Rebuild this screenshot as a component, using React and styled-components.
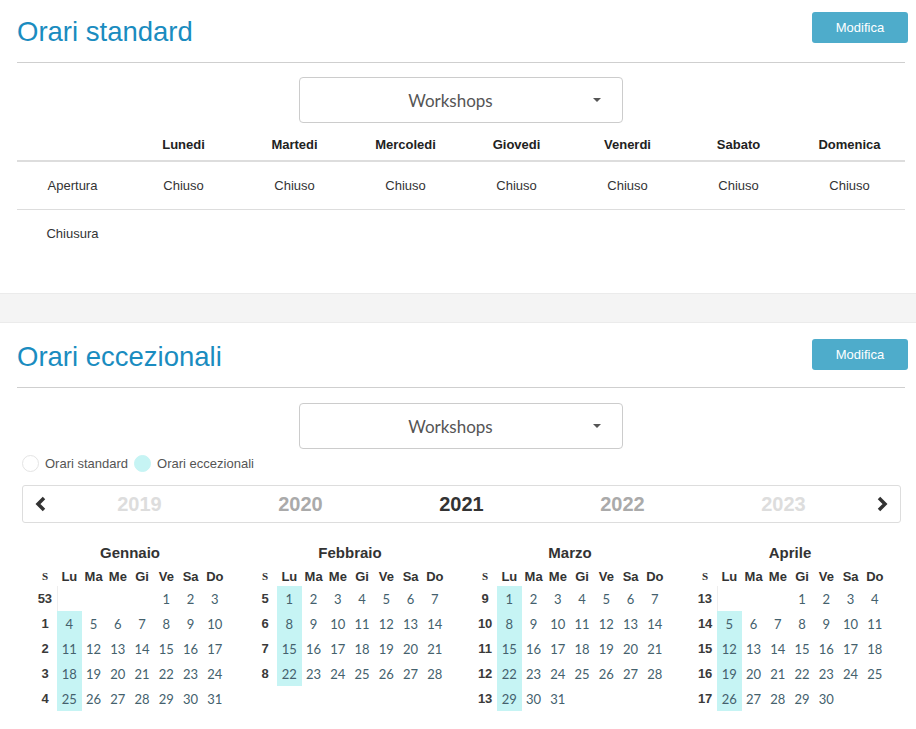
import React from 'react';
import styled, { createGlobalStyle } from 'styled-components';

const GlobalStyle = createGlobalStyle`
  body {
    margin: 0;
    background: #fff;
    font-family: 'Liberation Sans', Arial, sans-serif;
    color: #333;
  }
`;

const DAYS = ['Lunedi', 'Martedi', 'Mercoledi', 'Giovedi', 'Venerdi', 'Sabato', 'Domenica'];
const SHORT_DAYS = ['Lu', 'Ma', 'Me', 'Gi', 'Ve', 'Sa', 'Do'];
const MONTHS = ['Gennaio', 'Febbraio', 'Marzo', 'Aprile'];
const YEARS = [
  { label: '2019', tone: 'far' },
  { label: '2020', tone: 'near' },
  { label: '2021', tone: 'current' },
  { label: '2022', tone: 'near' },
  { label: '2023', tone: 'far' },
];

const isoWeek = (date) => {
  const d = new Date(Date.UTC(date.getFullYear(), date.getMonth(), date.getDate()));
  const day = d.getUTCDay() || 7;
  d.setUTCDate(d.getUTCDate() + 4 - day);
  const yearStart = new Date(Date.UTC(d.getUTCFullYear(), 0, 1));
  return Math.ceil(((d - yearStart) / 86400000 + 1) / 7);
};

const buildMonth = (year, month) => {
  const first = new Date(year, month, 1);
  const total = new Date(year, month + 1, 0).getDate();
  const offset = (first.getDay() + 6) % 7;
  const rows = [];
  let day = 1 - offset;
  while (day <= total) {
    const cells = [];
    let weekDate = null;
    for (let i = 0; i < 7; i++) {
      if (day >= 1 && day <= total) {
        cells.push(day);
        if (!weekDate) weekDate = new Date(year, month, day);
      } else {
        cells.push(null);
      }
      day++;
    }
    rows.push({ week: isoWeek(weekDate), cells });
  }
  return rows;
};

const Section = styled.section`
  padding: ${(p) => p.$top}px 11px ${(p) => p.$bottom}px 17px;
`;

const Header = styled.div`
  display: flex;
  justify-content: space-between;
  align-items: flex-start;
`;

const Title = styled.h2`
  margin: 0;
  font-size: 27.5px;
  line-height: 40px;
  font-weight: 400;
  color: #1a8cc0;
`;

const EditButton = styled.button`
  margin: ${(p) => p.$offset || 0}px -3px 0 0;
  width: 96px;
  height: 31px;
  border: none;
  border-radius: 3px;
  background: #4eaccb;
  color: #fff;
  font-family: 'Liberation Sans', Arial, sans-serif;
  font-size: 13px;
`;

const Divider = styled.hr`
  margin: 10px 0 0 0;
  border: none;
  border-top: 1px solid #cfcfcf;
`;

const Select = styled.div`
  width: 324px;
  height: 46px;
  margin: ${(p) => p.$top}px auto 0;
  border: 1px solid #ccc;
  border-radius: 4px;
  display: flex;
  align-items: center;
  padding-left: 8px;
  box-sizing: border-box;
`;

const SelectText = styled.span`
  flex: 1;
  text-align: center;
  font-family: Lato, 'Open Sans', sans-serif;
  font-size: 17px;
  color: #555;
`;

const Caret = styled.span`
  width: 0;
  height: 0;
  margin-right: 21px;
  border-left: 4px solid transparent;
  border-right: 4px solid transparent;
  border-top: 4px solid #555;
`;

const Table = styled.table`
  width: 888px;
  margin-top: 5px;
  border-collapse: collapse;
  table-layout: fixed;
  font-size: 13px;
`;

const Th = styled.th`
  height: 32px;
  padding: 0;
  font-weight: 700;
  color: #222;
  border-bottom: 2px solid #ddd;
`;

const Td = styled.td`
  height: 47px;
  padding: 0;
  text-align: center;
  color: #333;
  border-top: ${(p) => (p.$lined ? '1px solid #ddd' : 'none')};
`;

const Band = styled.div`
  height: 28px;
  background: #f4f4f4;
  border-top: 1px solid #ebebeb;
  border-bottom: 1px solid #ebebeb;
`;

const Legend = styled.div`
  display: flex;
  align-items: center;
  gap: 6px;
  margin: 6px 0 0 5px;
  font-size: 13px;
  color: #555;
`;

const Dot = styled.span`
  width: 17px;
  height: 17px;
  border-radius: 50%;
  box-sizing: border-box;
  background: ${(p) => (p.$filled ? '#c6f4f4' : '#fff')};
  border: 1px solid ${(p) => (p.$filled ? '#c6f4f4' : '#e4e4e4')};
`;

const LegendLabel = styled.span`
  color: #555;
`;

const YearNav = styled.div`
  display: flex;
  align-items: center;
  width: 879px;
  height: 38px;
  margin: 13px 0 0 5px;
  border: 1px solid #ddd;
  border-radius: 3px;
  box-sizing: border-box;
`;

const Arrow = styled.span`
  width: 36px;
  display: flex;
  justify-content: center;
  align-items: center;
`;

const Year = styled.span`
  flex: 1;
  text-align: center;
  font-size: 20px;
  font-weight: 700;
  color: ${(p) => (p.$tone === 'current' ? '#333' : p.$tone === 'near' ? '#aaa' : '#ddd')};
`;

const MonthGrid = styled.div`
  display: grid;
  grid-template-columns: repeat(4, 220px);
  margin: 18px 0 0 3px;
`;

const Month = styled.div`
  display: flex;
  flex-direction: column;
  align-items: center;
`;

const MonthName = styled.div`
  height: 25px;
  line-height: 24px;
  font-size: 15px;
  font-weight: 700;
  color: #333;
`;

const CalTable = styled.table`
  border-collapse: collapse;
  table-layout: fixed;
  width: 194px;
`;

const CalHead = styled.th`
  width: 24px;
  height: 20px;
  padding: 0;
  font-size: ${(p) => (p.$week ? 11 : 13)}px;
  font-weight: 700;
  color: #333;
  font-family: ${(p) => (p.$week ? "'Liberation Serif', serif" : "'Liberation Sans', Arial, sans-serif")};
`;

const WeekCell = styled.td`
  height: 25px;
  padding: 0;
  text-align: center;
  font-size: 13px;
  font-weight: 700;
  color: #3a3a3a;
`;

const DayCell = styled.td`
  height: 25px;
  padding: 0;
  text-align: center;
  font-family: Lato, 'Open Sans', sans-serif;
  font-size: 13px;
  color: #44616d;
  background: ${(p) => (p.$special ? '#c6f4f4' : 'transparent')};
  border-left: ${(p) => (p.$edge ? '1px solid #eee' : 'none')};
`;

const Chevron = ({ dir }) => (
  <svg width="14" height="18" viewBox="0 0 14 18">
    <polyline
      points={dir === 'left' ? '10,3 4,9 10,15' : '4,3 10,9 4,15'}
      fill="none"
      stroke="#333"
      strokeWidth="3.5"
      strokeLinejoin="miter"
    />
  </svg>
);

const MonthCalendar = ({ name, index }) => {
  const rows = buildMonth(2021, index);
  return (
    <Month>
      <MonthName>{name}</MonthName>
      <CalTable>
        <thead>
          <tr>
            <CalHead $week>S</CalHead>
            {SHORT_DAYS.map((d) => (
              <CalHead key={d}>{d}</CalHead>
            ))}
          </tr>
        </thead>
        <tbody>
          {rows.map((row) => (
            <tr key={row.week}>
              <WeekCell>{row.week}</WeekCell>
              {row.cells.map((day, i) => (
                <DayCell key={i} $special={i === 0 && day} $edge={i === 0 && !day}>
                  {day}
                </DayCell>
              ))}
            </tr>
          ))}
        </tbody>
      </CalTable>
    </Month>
  );
};

const App = () => (
  <>
    <GlobalStyle />
    <Section $top={12} $bottom={36}>
      <Header>
        <Title>Orari standard</Title>
        <EditButton>Modifica</EditButton>
      </Header>
      <Divider />
      <Select $top={14}>
        <SelectText>Workshops</SelectText>
        <Caret />
      </Select>
      <Table>
        <thead>
          <tr>
            <Th />
            {DAYS.map((d) => (
              <Th key={d}>{d}</Th>
            ))}
          </tr>
        </thead>
        <tbody>
          <tr>
            <Td>Apertura</Td>
            {DAYS.map((d) => (
              <Td key={d}>Chiuso</Td>
            ))}
          </tr>
          <tr>
            <Td $lined>Chiusura</Td>
            {DAYS.map((d) => (
              <Td key={d} $lined />
            ))}
          </tr>
        </tbody>
      </Table>
    </Section>

    <Band />

    <Section $top={14} $bottom={20}>
      <Header>
        <Title>Orari eccezionali</Title>
        <EditButton $offset={2}>Modifica</EditButton>
      </Header>
      <Divider />
      <Select $top={15}>
        <SelectText>Workshops</SelectText>
        <Caret />
      </Select>
      <Legend>
        <Dot />
        <LegendLabel>Orari standard</LegendLabel>
        <Dot $filled />
        <LegendLabel>Orari eccezionali</LegendLabel>
      </Legend>
      <YearNav>
        <Arrow>
          <Chevron dir="left" />
        </Arrow>
        {YEARS.map((y) => (
          <Year key={y.label} $tone={y.tone}>
            {y.label}
          </Year>
        ))}
        <Arrow>
          <Chevron dir="right" />
        </Arrow>
      </YearNav>
      <MonthGrid>
        {MONTHS.map((m, i) => (
          <MonthCalendar key={m} name={m} index={i} />
        ))}
      </MonthGrid>
    </Section>
  </>
);

export default App;
